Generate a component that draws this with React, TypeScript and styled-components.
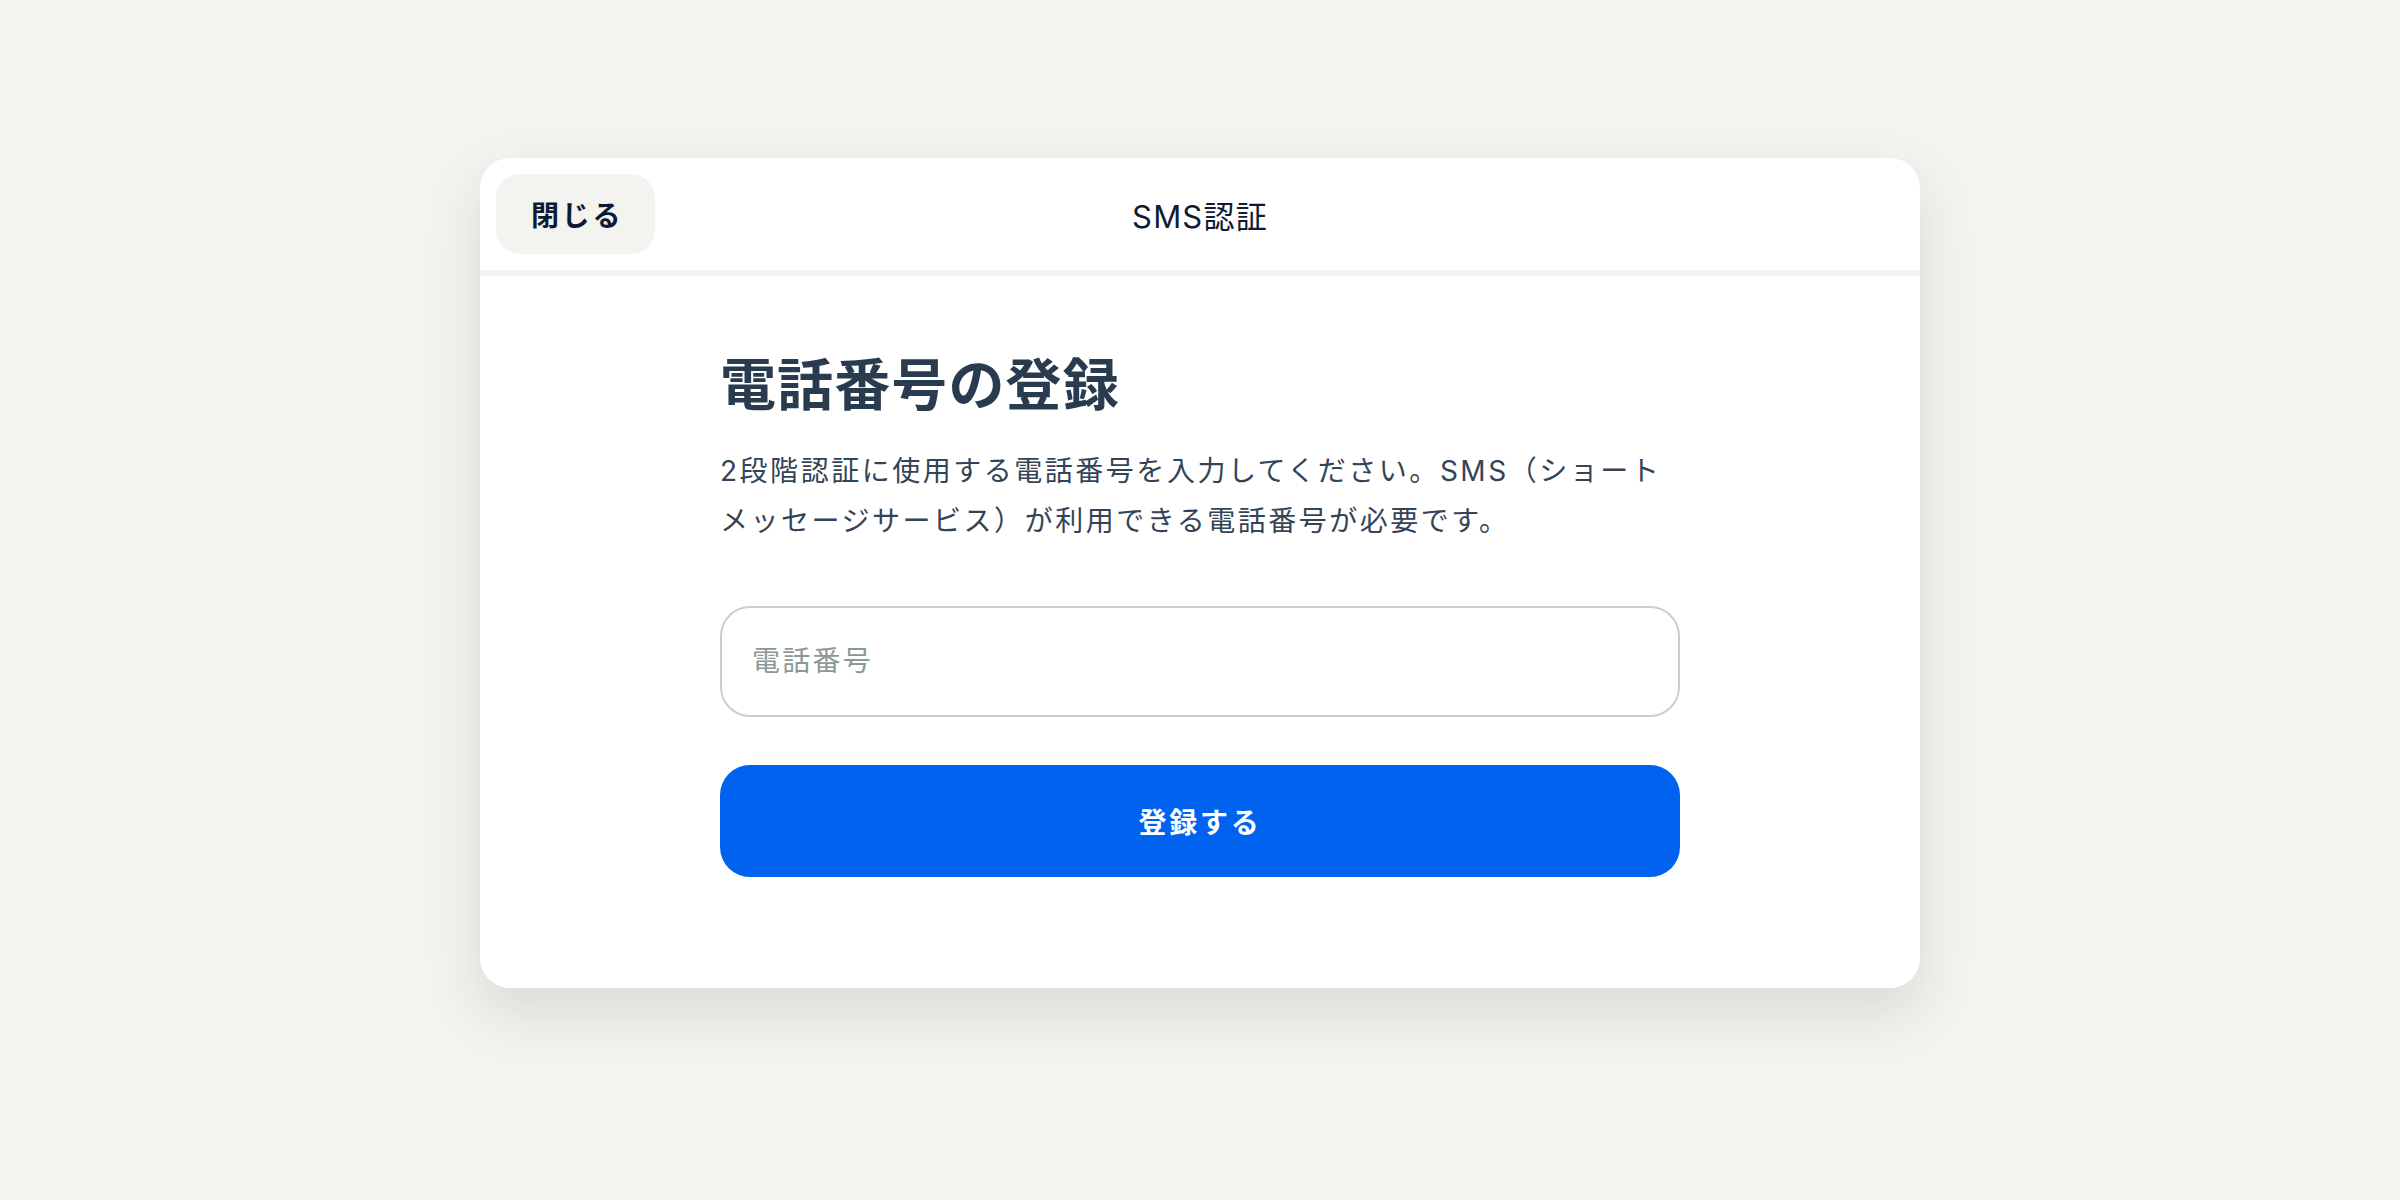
import React from "react";
import styled, { createGlobalStyle } from "styled-components";

const GlobalStyle = createGlobalStyle`
  html, body {
    margin: 0;
    padding: 0;
    background: #f3f3ef;
  }

  body {
    font-family: Inter, "Noto Sans CJK JP", sans-serif;
    -webkit-font-smoothing: antialiased;
  }
`;

const Page = styled.div`
  min-height: 1200px;
  display: flex;
  justify-content: center;
  align-items: flex-start;
  padding-top: 158px;
  box-sizing: border-box;
`;

const Card = styled.section`
  width: 1440px;
  background: #ffffff;
  border-radius: 30px;
  box-shadow: 0 24px 56px rgba(30, 40, 40, 0.12);
  overflow: hidden;
`;

const Header = styled.header`
  height: 112px;
  display: grid;
  grid-template-columns: 1fr auto 1fr;
  align-items: center;
  padding: 0 16px;
  border-bottom: 6px solid #f3f3ef;
`;

const CloseButton = styled.button`
  justify-self: start;
  height: 80px;
  padding: 0 32px 0 35px;
  border: none;
  border-radius: 24px;
  background: #f3f3ef;
  color: #0d1a33;
  font-family: inherit;
  font-size: 28px;
  font-weight: 700;
  letter-spacing: 0.1em;
  cursor: pointer;
`;

const HeaderTitle = styled.h1`
  margin: 0;
  font-size: 31px;
  font-weight: 400;
  letter-spacing: 0.04em;
  color: #101c33;
`;

const Body = styled.div`
  width: 960px;
  margin: 0 auto;
  padding: 70px 0 111px;
  display: flex;
  flex-direction: column;
`;

const Title = styled.h2`
  margin: 0;
  font-size: 56px;
  line-height: 1.4;
  font-weight: 700;
  letter-spacing: 0.02em;
  color: #293b4f;
`;

const Description = styled.p`
  margin: 23px 0 0;
  font-size: 28px;
  line-height: 1.76;
  letter-spacing: 0.09em;
  color: #344457;
`;

const PhoneInput = styled.input`
  margin-top: 60px;
  height: 111px;
  box-sizing: border-box;
  padding: 0 30px;
  border: 2px solid #cbcfc8;
  border-radius: 30px;
  background: #ffffff;
  font-family: inherit;
  font-size: 28px;
  letter-spacing: 0.08em;
  color: #293b4f;
  outline: none;

  &::placeholder {
    color: #8b9896;
  }
`;

const SubmitButton = styled.button`
  margin-top: 48px;
  height: 112px;
  border: none;
  border-radius: 30px;
  background: #0063f0;
  color: #ffffff;
  font-family: inherit;
  font-size: 28px;
  font-weight: 700;
  letter-spacing: 0.1em;
  cursor: pointer;
`;

export default function App() {
  return (
    <>
      <GlobalStyle />
      <Page>
        <Card>
          <Header>
            <CloseButton type="button">閉じる</CloseButton>
            <HeaderTitle>SMS認証</HeaderTitle>
          </Header>
          <Body>
            <Title>電話番号の登録</Title>
            <Description>
              2段階認証に使用する電話番号を入力してください。SMS（ショート
              <br />
              メッセージサービス）が利用できる電話番号が必要です。
            </Description>
            <PhoneInput type="tel" placeholder="電話番号" />
            <SubmitButton type="button">登録する</SubmitButton>
          </Body>
        </Card>
      </Page>
    </>
  );
}
